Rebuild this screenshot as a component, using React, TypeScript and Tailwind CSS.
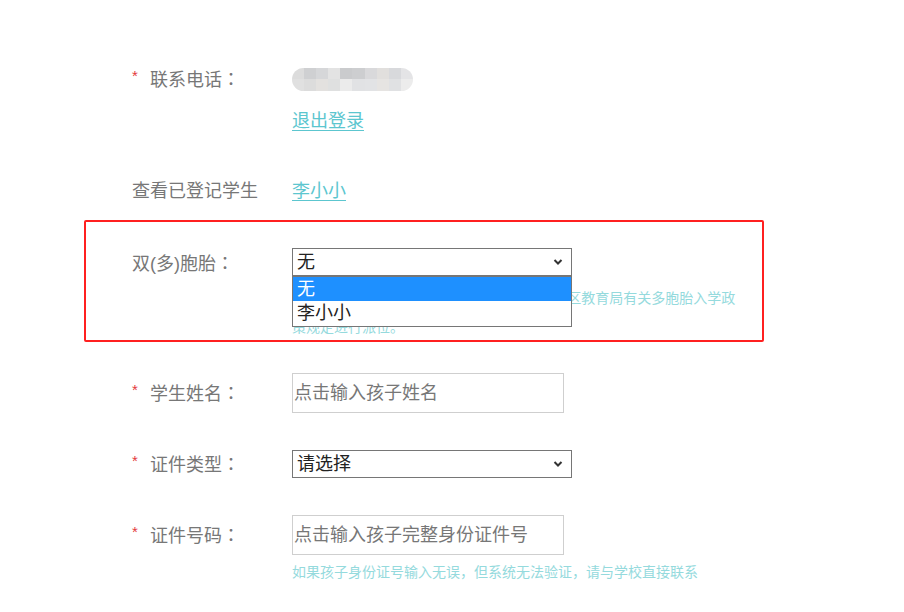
import React from 'react';

const PILL_TOP = ['bg-[#dcdcdc]', 'bg-[#cfd0d2]', 'bg-[#d6d7d9]', 'bg-[#e3e3e3]', 'bg-[#cacbcd]', 'bg-[#cdced0]', 'bg-[#d9d9db]', 'bg-[#e1dfdd]', 'bg-[#d8d9dc]', 'bg-[#e4e4e6]'];
const PILL_BOTTOM = ['bg-[#e0e0e0]', 'bg-[#dcdcdc]', 'bg-[#e3e1df]', 'bg-[#dfe0e0]', 'bg-[#ebebeb]', 'bg-[#e1e2e4]', 'bg-[#e2e3e5]', 'bg-[#e6e4e2]', 'bg-[#e0e1e3]', 'bg-[#ececec]'];

const Star = () => (
  <span className="w-[18px] text-[15px] leading-none text-[#e4393c] mb-[8px]">*</span>
);

const Label: React.FC<{ text: string; required?: boolean; colon?: boolean }> = ({ text, required, colon = true }) => (
  <div className="w-[160px] flex items-center shrink-0">
    {required && <Star />}
    <span className="text-[18px] text-[#777]">
      {text}
      {colon && <span className="font-['Noto_Sans_CJK_TC',sans-serif]">：</span>}
    </span>
  </div>
);

const Chevron = () => (
  <svg width="10" height="7" viewBox="0 0 10 7" className="absolute right-[8px] top-1/2 -translate-y-1/2">
    <path d="M1.5 1.5 L5 5 L8.5 1.5" fill="none" stroke="#333" strokeWidth="2" />
  </svg>
);

const FakeSelect: React.FC<{ value: string; children?: React.ReactNode }> = ({ value, children }) => (
  <div className="relative w-[280px] h-[28px] border border-[#767676] bg-white flex items-center pl-[4px] text-[18px] text-[#222]">
    {value}
    <Chevron />
    {children}
  </div>
);

const TextBox: React.FC<{ placeholder: string }> = ({ placeholder }) => (
  <input
    placeholder={placeholder}
    className="w-[272px] h-[40px] border border-[#cfcfcf] px-[1px] text-[18px] text-[#333] placeholder:text-[#777] outline-none"
  />
);

export default function App() {
  return (
    <div className="w-[904px] h-[612px] bg-white overflow-hidden font-['Liberation_Sans','Noto_Sans_CJK_SC',sans-serif]">
      <div className="pt-[56px] ml-[84px] w-[680px]">
        <div className="h-[46px] pl-[48px] flex items-center">
          <Label text="联系电话" required />
          <div className="w-[121px] h-[23px] rounded-full overflow-hidden flex flex-col">
            <div className="flex flex-1">
              {PILL_TOP.map((c, i) => <div key={i} className={`flex-1 ${c}`} />)}
            </div>
            <div className="flex flex-1">
              {PILL_BOTTOM.map((c, i) => <div key={i} className={`flex-1 ${c}`} />)}
            </div>
          </div>
        </div>
        <div className="h-[38px] pl-[208px] flex items-center">
          <a className="text-[18px] text-[#5cc6cf] underline underline-offset-[3px] cursor-pointer">退出登录</a>
        </div>

        <div className="mt-[31px] h-[40px] pl-[48px] flex items-center">
          <Label text="查看已登记学生" colon={false} />
          <a className="text-[18px] text-[#5cc6cf] underline underline-offset-[3px] cursor-pointer">李小小</a>
        </div>

        <div className="mt-[9px] h-[122px] border-2 border-[#ff2020] rounded-[2px] pl-[46px] pt-[26px]">
          <div className="flex">
            <div className="h-[28px] pt-[2px] flex items-center">
              <Label text="双(多)胞胎" />
            </div>
            <div>
              <FakeSelect value="无">
                <div className="absolute left-[-1px] top-[26px] w-[280px] border border-[#767676] border-t-2 bg-white z-10">
                  <div className="h-[24px] pl-[4px] flex items-center bg-[#1e90ff] text-white">无</div>
                  <div className="h-[25px] pl-[4px] flex items-center text-[#222]">李小小</div>
                </div>
              </FakeSelect>
              <div className="mt-[8px] text-[14px] leading-[29px] text-[#95dadd] whitespace-nowrap">
                <div>如选择双(多)胞胎，学校将按照市教育局及本区教育局有关多胞胎入学政</div>
                <div>策规定进行派位。</div>
              </div>
            </div>
          </div>
        </div>

        <div className="mt-[31px] h-[40px] pl-[48px] flex items-center">
          <Label text="学生姓名" required />
          <TextBox placeholder="点击输入孩子姓名" />
        </div>

        <div className="mt-[37px] h-[28px] pl-[48px] flex items-center">
          <Label text="证件类型" required />
          <FakeSelect value="请选择" />
        </div>

        <div className="mt-[37px] h-[40px] pl-[48px] flex items-center">
          <Label text="证件号码" required />
          <TextBox placeholder="点击输入孩子完整身份证件号" />
        </div>
        <div className="mt-[7px] pl-[208px] text-[14px] leading-[20px] text-[#95dadd]">
          如果孩子身份证号输入无误，但系统无法验证，请与学校直接联系
        </div>
      </div>
    </div>
  );
}
